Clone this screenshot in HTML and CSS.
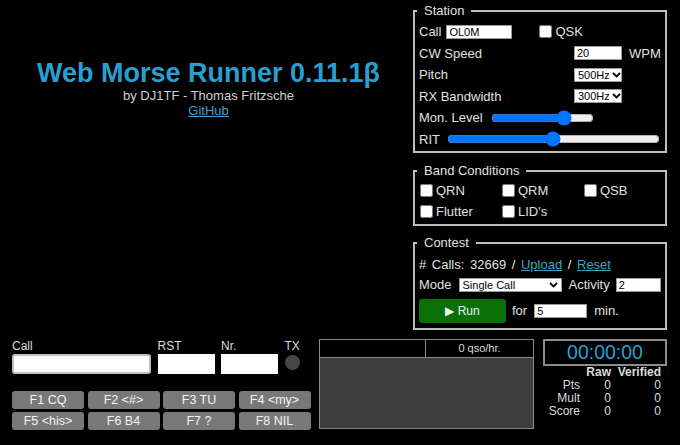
FILE: index.html
```html
<!DOCTYPE html>
<html lang="en">
<head>
<meta charset="utf-8">
<title>Web Morse Runner</title>
<link rel="stylesheet" href="styles.css">
</head>
<body>
<div class="page">
  <div class="top">
    <header class="intro">
      <h1 class="title">Web Morse Runner 0.11.1β</h1>
      <div class="byline">by DJ1TF - Thomas Fritzsche</div>
      <a class="link" href="#">GitHub</a>
    </header>

    <div class="settings">
      <fieldset class="group station">
        <legend>Station</legend>
        <div class="row">
          <span>Call</span>
          <input class="field call-sign" type="text" value="OL0M">
          <label class="check qsk"><input type="checkbox">QSK</label>
        </div>
        <div class="row grid3">
          <span>CW Speed</span>
          <input class="field" type="text" value="20">
          <span class="unit">WPM</span>
        </div>
        <div class="row grid3">
          <span>Pitch</span>
          <span class="sel pick">
            <select class="field"><option>500Hz</option></select>
            <svg class="chev" width="9" height="6" viewBox="0 0 9 6"><path d="M1 1l3.5 3.5L8 1" fill="none" stroke="#000" stroke-width="1.8"/></svg>
          </span>
        </div>
        <div class="row grid3">
          <span>RX Bandwidth</span>
          <span class="sel pick">
            <select class="field"><option>300Hz</option></select>
            <svg class="chev" width="9" height="6" viewBox="0 0 9 6"><path d="M1 1l3.5 3.5L8 1" fill="none" stroke="#000" stroke-width="1.8"/></svg>
          </span>
        </div>
        <div class="row">
          <span>Mon. Level</span>
          <input class="range mon" type="range" min="0" max="100" value="75">
        </div>
        <div class="row">
          <span>RIT</span>
          <input class="range rit" type="range" min="-500" max="500" value="0">
        </div>
      </fieldset>

      <fieldset class="group band">
        <legend>Band Conditions</legend>
        <div class="band-grid">
          <label class="check"><input type="checkbox">QRN</label>
          <label class="check"><input type="checkbox">QRM</label>
          <label class="check"><input type="checkbox">QSB</label>
          <label class="check"><input type="checkbox">Flutter</label>
          <label class="check"><input type="checkbox">LID's</label>
        </div>
      </fieldset>

      <fieldset class="group contest">
        <legend>Contest</legend>
        <div class="row calls"><span># Calls: 32669 / <a class="link" href="#">Upload</a> / <a class="link" href="#">Reset</a></span></div>
        <div class="row">
          <span>Mode</span>
          <span class="sel mode">
            <select class="field"><option>Single Call</option></select>
            <svg class="chev" width="9" height="6" viewBox="0 0 9 6"><path d="M1 1l3.5 3.5L8 1" fill="none" stroke="#000" stroke-width="1.8"/></svg>
          </span>
          <span class="activity">Activity</span>
          <input class="field act" type="text" value="2">
        </div>
        <div class="row run-row">
          <button class="run" type="button">&#9654; Run</button>
          <span class="for">for</span>
          <input class="field minutes" type="text" value="5">
          <span class="min">min.</span>
        </div>
      </fieldset>
    </div>
  </div>

  <div class="bottom">
    <div class="entry">
      <div class="entry-fields">
        <span class="cap">Call</span>
        <span class="cap">RST</span>
        <span class="cap">Nr.</span>
        <span class="cap">TX</span>
        <input class="box his-call" type="text">
        <input class="box" type="text">
        <input class="box" type="text">
        <span class="tx"></span>
      </div>
      <div class="keys">
        <button class="key" type="button">F1 CQ</button>
        <button class="key" type="button">F2 &lt;#&gt;</button>
        <button class="key" type="button">F3 TU</button>
        <button class="key" type="button">F4 &lt;my&gt;</button>
        <button class="key" type="button">F5 &lt;his&gt;</button>
        <button class="key" type="button">F6 B4</button>
        <button class="key" type="button">F7 ?</button>
        <button class="key" type="button">F8 NIL</button>
      </div>
    </div>

    <div class="log">
      <div class="log-head">
        <span></span>
        <span class="rate">0 qso/hr.</span>
      </div>
    </div>

    <div class="score">
      <div class="clock">00:00:00</div>
      <div class="totals">
        <span></span><b>Raw</b><b>Verified</b>
        <span>Pts</span><span>0</span><span>0</span>
        <span>Mult</span><span>0</span><span>0</span>
        <span>Score</span><span>0</span><span>0</span>
      </div>
    </div>
  </div>
</div>
</body>
</html>
```

FILE: styles.css
```css
* { box-sizing: border-box; }

html, body {
  margin: 0;
  background: #000;
}

body {
  width: 680px;
  height: 445px;
  overflow: hidden;
  font-family: "Liberation Sans", Arial, sans-serif;
  font-size: 13px;
  color: #e0e0e0;
}

/* ---------- header ---------- */
.top { display: flex; }

.intro {
  flex: 1;
  padding-top: 57px;
  padding-left: 4px;
  text-align: center;
}

.title {
  margin: 0;
  font-size: 27px;
  line-height: 32px;
  font-weight: bold;
  color: #2a9fcf;
}

.byline {
  font-size: 13px;
  line-height: 14px;
  color: #d0d0d0;
}

.link {
  color: #3aa3cc;
  text-decoration: underline;
}

.intro .link {
  display: inline-block;
  font-size: 13px;
  line-height: 14px;
}

/* ---------- settings column ---------- */
.settings {
  width: 254px;
  margin-right: 13px;
  padding-top: 3px;
  display: flex;
  flex-direction: column;
}

.group {
  margin: 0;
  min-width: 0;
  border: 2px solid #bdbdbd;
  padding: 3px 3px 1px 4px;
}

.group legend {
  margin-left: -2px;
  padding: 0 7px;
  font-size: 13px;
  line-height: 15px;
}

.band { margin-top: 10px; padding-top: 2px; padding-bottom: 2px; }
.contest { margin-top: 9px; padding-top: 4.5px; padding-bottom: 5px; }

.row {
  display: flex;
  align-items: center;
  height: 21.5px;
  white-space: nowrap;
}

.grid3 {
  display: grid;
  grid-template-columns: 1fr 48px 40px;
  align-items: center;
}

.unit { padding-left: 7px; }

.field {
  height: 14px;
  margin: 0;
  padding: 0 2px;
  border: 1px solid #9a9a9a;
  border-radius: 0;
  background: #fff;
  color: #000;
  font: 11px "Liberation Sans", Arial, sans-serif;
}

/* select boxes with a drawn chevron */
.sel {
  position: relative;
  display: block;
  height: 14px;
}

.sel select {
  appearance: none;
  -webkit-appearance: none;
  display: block;
  width: 100%;
  padding: 0 12px 0 3px;
  line-height: 12px;
}

.chev {
  position: absolute;
  right: 1px;
  top: 4px;
  pointer-events: none;
}

.mode .chev { right: 4px; }

.pick { width: 48px; }

.call-sign { width: 66px; margin-left: 5px; }

.check {
  display: flex;
  align-items: center;
}

.check input {
  width: 13px;
  height: 13px;
  margin: 0 3px 0 1px;
}

.qsk { margin-left: 26px; }

.range {
  margin: 0;
  height: 14px;
}

.mon { width: 103px; margin-left: 8px; }
.rit { flex: 1; margin-left: 7px; margin-right: 2px; }

.band-grid {
  display: grid;
  grid-template-columns: 82px 82px 1fr;
  grid-auto-rows: 21px;
  align-items: center;
}

.contest .row { height: 20px; }
.calls span { word-spacing: 2px; }

.mode { width: 103px; margin-left: 7px; }
.activity { margin-left: 7px; }
.act { width: 45px; margin-left: 6px; }

.contest .run-row { height: 24px; margin-top: 4px; }

.run {
  width: 87px;
  height: 24px;
  border: 0;
  border-radius: 3px;
  background: #077007;
  color: #f2f2f2;
  font: 12px "Liberation Sans", Arial, sans-serif;
  padding: 0;
}

.for { margin-left: 6px; }
.minutes { width: 53px; margin-left: 7px; }
.min { margin-left: 7px; }

/* ---------- bottom strip ---------- */
.bottom {
  display: flex;
  margin-top: 9px;
  padding-left: 12px;
}

.entry { width: 298px; }

.entry-fields {
  display: grid;
  grid-template-columns: 139px 57px 57px 15px;
  column-gap: 6.5px;
  align-items: start;
}

.cap {
  font-size: 12px;
  line-height: 14px;
  color: #dcdcdc;
}

.box {
  height: 20px;
  margin: 1px 0 0;
  padding: 0 3px;
  border: 1px solid #fff;
  background: #fff;
  font: 12px "Liberation Sans", Arial, sans-serif;
}

.his-call {
  border: 2px solid #bdbdbd;
  border-radius: 3px;
}

.tx {
  width: 15px;
  height: 15px;
  margin-top: 2px;
  border-radius: 50%;
  background: #474747;
}

.keys {
  display: grid;
  grid-template-columns: repeat(4, 72px);
  grid-auto-rows: 18px;
  column-gap: 3.5px;
  row-gap: 3px;
  margin-top: 17px;
}

.key {
  padding: 0;
  border: 0;
  border-radius: 3px;
  background: #787878;
  color: #f4f4f4;
  font: 12.5px "Liberation Sans", Arial, sans-serif;
}

.log {
  width: 215px;
  height: 90px;
  margin-left: 9px;
  border: 1px solid #8a8a8a;
  background: #3e3e3e;
}

.log-head {
  display: grid;
  grid-template-columns: 106px 1fr;
  height: 18px;
  background: #000;
  border-bottom: 1px solid #8a8a8a;
}

.log-head span:first-child { border-right: 1px solid #8a8a8a; }

.rate {
  font-size: 11px;
  line-height: 17px;
  text-align: center;
  color: #dcdcdc;
}

.score {
  width: 124px;
  margin-left: 9px;
}

.clock {
  height: 27px;
  border: 2px solid #8c8c8c;
  color: #2a9fcf;
  font-size: 19.5px;
  line-height: 23px;
  text-align: center;
}

.totals {
  display: grid;
  grid-template-columns: 1fr 31px 50px;
  margin-right: 6px;
  font-size: 12px;
  line-height: 13px;
  text-align: right;
  color: #dcdcdc;
}
```
